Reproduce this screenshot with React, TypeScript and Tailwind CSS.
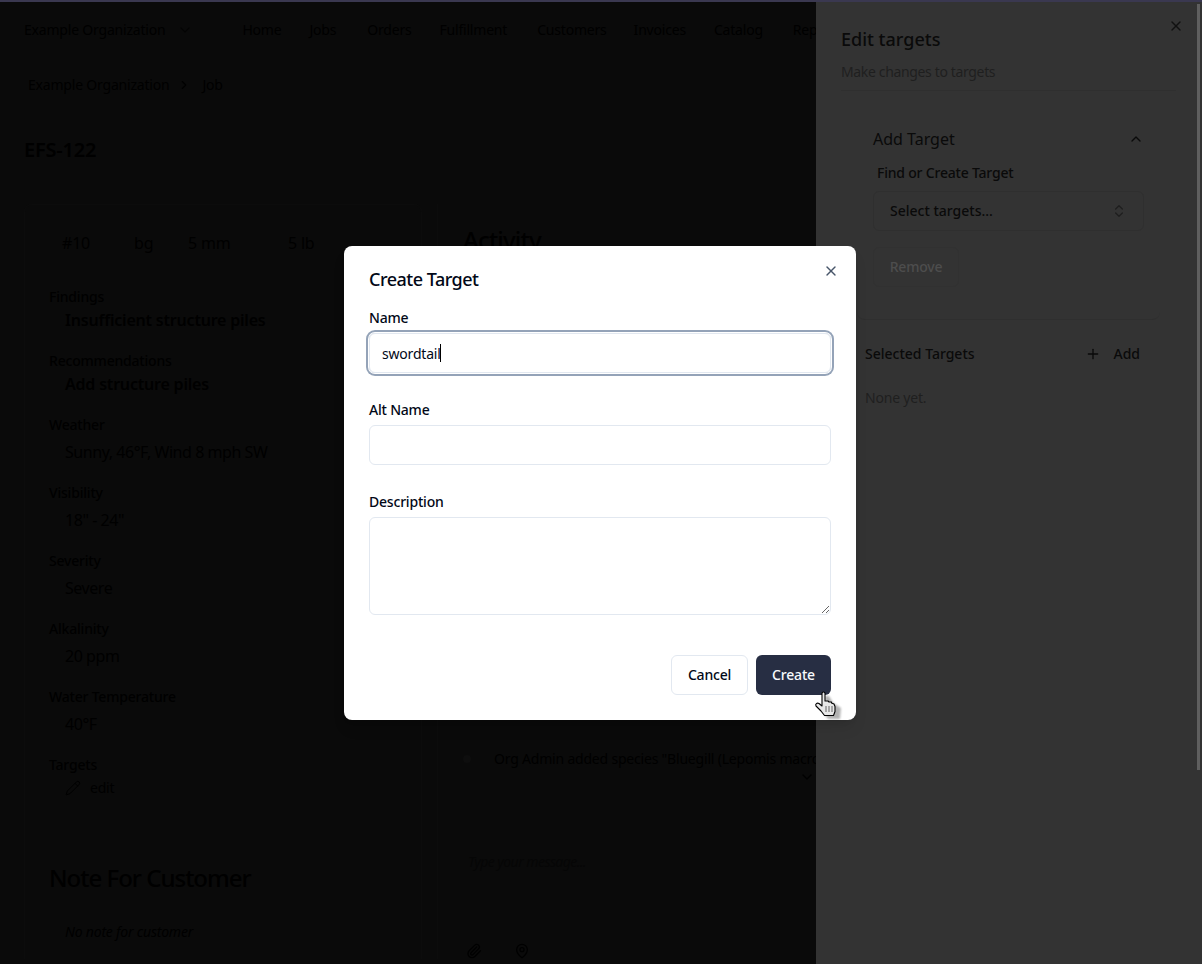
import { X, ChevronDown, ChevronUp, ChevronRight, ChevronsUpDown, Plus, Pencil, Paperclip, MapPin } from "lucide-react";

const nav = [
  { label: "Home", cls: "" },
  { label: "Jobs", cls: "mr-[3px]" },
  { label: "Orders", cls: "" },
  { label: "Fulfillment", cls: "mr-[2px]" },
  { label: "Customers", cls: "-mr-[1px]" },
  { label: "Invoices", cls: "" },
  { label: "Catalog", cls: "mr-[2px]" },
  { label: "Reports", cls: "" },
];
const fields = [
  { label: "Weather", value: "Sunny, 46°F, Wind 8 mph SW" },
  { label: "Visibility", value: '18" - 24"' },
  { label: "Severity", value: "Severe" },
  { label: "Alkalinity", value: "20 ppm" },
  { label: "Water Temperature", value: "40°F" },
];

function Field({ label, value }: { label: string; value: string }) {
  return (
    <div className="h-[68px]">
      <div className="h-5 text-sm leading-5 font-medium">{label}</div>
      <div className="mt-[5px] pl-4 text-base leading-6 tracking-[-0.45px]">{value}</div>
    </div>
  );
}

function Bold({ label, value }: { label: string; value: string }) {
  return (
    <div className="h-16">
      <div className="h-5 text-sm leading-5 font-medium">{label}</div>
      <div className="pl-4 mt-[1px] text-base leading-6 font-semibold">{value}</div>
    </div>
  );
}

function Page() {
  return (
    <div className="w-[816px] shrink-0 h-full overflow-hidden border-t-2 border-[#3a3850] text-black whitespace-nowrap">
      <div className="h-14 flex items-center pl-6 text-sm">
        <span className="shrink-0">Example Organization</span>
        <ChevronDown className="ml-3 w-4 h-4 opacity-60 shrink-0" />
        <div className="ml-[49px] flex gap-7 shrink-0">
          {nav.map((n) => (
            <span key={n.label} className={n.cls}>
              {n.label}
            </span>
          ))}
        </div>
      </div>
      <div className="mt-[17px] pl-7 flex items-center text-sm h-5">
        <span>Example Organization</span>
        <ChevronRight className="ml-2 mr-[11px] w-3.5 h-3.5" />
        <span>Job</span>
      </div>
      <div className="mt-[39px] pl-6 h-8 text-xl leading-8 font-semibold">EFS-122</div>
      <div className="mt-[38px] flex gap-[15px] pl-6">
        <div className="w-[398px] shrink-0 border border-[#0c0c0c] border-b-0 rounded-t-lg pl-6 pt-[32px]">
          <div className="flex h-6 items-center text-base -mt-[6px] pl-[13px]">
            <span className="w-[72px]">#10</span>
            <span className="w-[54px]">bg</span>
            <span className="w-[100px]">5 mm</span>
            <span>5 lb</span>
          </div>
          <div className="mt-[32px]">
            <Bold label="Findings" value="Insufficient structure piles" />
            <Bold label="Recommendations" value="Add structure piles" />
            {fields.map((f) => (
              <Field key={f.label} {...f} />
            ))}
            <div className="h-5 text-sm leading-5 font-medium">Targets</div>
            <div className="mt-[3px] pl-4 flex items-center gap-[9px] text-sm h-5">
              <Pencil className="w-4 h-4" strokeWidth={1.5} />
              <span>edit</span>
            </div>
            <div className="mt-[64px] h-8 text-2xl leading-8 font-medium tracking-[-1px]">Note For Customer</div>
            <div className="mt-[28px] pl-4 text-sm italic leading-5">No note for customer</div>
          </div>
        </div>
        <div className="flex-1 min-w-0 border-l border-[#0c0c0c] pl-[25px] pt-[20px]">
          <div className="h-8 text-2xl leading-8 font-medium tracking-[-0.8px]">Activity</div>
          <div className="mt-[493px] flex items-center gap-[23px] text-sm h-5">
            <span className="w-2 h-2 shrink-0 rounded-full bg-[#0e0e0e]" />
            <span className="shrink-0">Org Admin added species "Bluegill (Lepomis macrochirus)"</span>
          </div>
          <div className="flex justify-end pr-[1px]">
            <ChevronDown className="w-4 h-4" />
          </div>
          <div className="mt-[67px] pl-[5px] text-sm italic leading-5 text-[#060606] tracking-[-0.55px]">Type your message...</div>
          <div className="mt-[71px] flex gap-[32px] pl-[3px]">
            <Paperclip className="w-4 h-4" />
            <MapPin className="w-4 h-4" />
          </div>
        </div>
      </div>
    </div>
  );
}

function Sheet() {
  return (
    <div className="relative flex-1 h-full bg-[#333333] border-t-2 border-[#3a3850] text-[#0a0a0a] whitespace-nowrap">
      <X className="absolute right-[18px] top-[16px] w-4 h-4 text-[#111]" />
      <div className="absolute right-[2px] top-[2px] w-[3px] h-[766px] bg-[#5f5f5f]" />
      <div className="pl-[25px] pr-[26px] pt-[25px]">
        <div className="h-[25px] text-lg leading-[25px] font-medium tracking-[0px]">Edit targets</div>
        <div className="mt-[10px] h-5 text-sm leading-5 text-[#1f1f1f] tracking-[-0.35px]">Make changes to targets</div>
        <div className="mt-[8px] border-t border-[#2f2f2f]" />
        <div className="mt-px ml-[16px] mr-[16px] h-[228px] border-b border-[#2f2f2f] rounded-b-lg px-4 pt-[35px]">
          <div className="flex items-center justify-between h-6 text-base tracking-[0px]">
            <span>Add Target</span>
            <ChevronUp className="w-4 h-4" />
          </div>
          <div className="mt-[12px] pl-1 h-5 text-sm leading-5 font-medium">Find or Create Target</div>
          <div className="mt-2 w-[271px] h-10 rounded-md border border-[#2f2f2f] flex items-center justify-between pl-4 pr-[16px] text-sm font-medium tracking-[0px]">
            <span>Select targets...</span>
            <ChevronsUpDown className="w-4 h-4 opacity-50" />
          </div>
          <div className="mt-[16px] w-[86px] h-10 rounded-md border border-[#313131] flex items-center justify-center text-sm font-medium text-[#4d4d4d]">
            Remove
          </div>
        </div>
        <div className="mt-[24px] ml-[-1px] pl-[25px] pr-[36px] flex items-center justify-between h-5 text-sm font-medium tracking-[0px]">
          <span>Selected Targets</span>
          <span className="flex items-center gap-[12px]">
            <Plus className="w-4 h-4" />
            Add
          </span>
        </div>
        <div className="mt-[24px] ml-[24px] h-5 text-sm leading-5 text-[#1f1f1f]">None yet.</div>
      </div>
    </div>
  );
}

function Dialog() {
  return (
    <div className="absolute left-[344px] top-[246px] w-[512px] h-[474px] bg-white rounded-lg px-[25px] pt-6 text-[#020817] shadow-lg">
      <X className="absolute right-[17px] top-[17px] w-4 h-4 text-[#475569]" />
      <div className="h-[18px] text-lg leading-[18px] font-medium tracking-[-0.5px]">Create Target</div>
      <div className="mt-[20px] h-5 text-sm leading-5 font-medium">Name</div>
      <div className="relative mt-[5px]">
        <input
          readOnly
          value="swordtail"
          className="w-full h-10 rounded-md border border-[#e2e8f0] px-3 text-sm tracking-[-0.2px] outline-none ring-2 ring-[#94a3b8] ring-offset-1"
        />
        <span className="absolute left-[71px] top-[11px] w-px h-[18px] bg-black" />
      </div>
      <div className="mt-[27px] h-5 text-sm leading-5 font-medium">Alt Name</div>
      <input readOnly className="mt-[5px] block w-full h-10 rounded-md border border-[#e2e8f0] px-3 text-sm outline-none" />
      <div className="mt-[27px] h-5 text-sm leading-5 font-medium">Description</div>
      <textarea readOnly className="mt-[5px] block w-full h-[98px] rounded-md border border-[#e2e8f0] px-3 py-2 text-sm outline-none" />
      <div className="mt-10 flex justify-end gap-2">
        <div className="w-[77px] h-10 rounded-md border border-[#e2e8f0] flex items-center justify-center text-sm font-medium">Cancel</div>
        <div className="w-[75px] h-10 rounded-md bg-[#272e43] text-[#f8fafc] flex items-center justify-center text-sm font-medium">Create</div>
      </div>
    </div>
  );
}

function HandCursor() {
  return (
    <svg className="absolute left-[812px] top-[688px]" width="32" height="34" viewBox="0 0 32 34">
      <path d="M12 8 L12 18 L10 17 L7 18 L12 27 L15 31 L27 31 L28 20 L20 15 L16 8 Z" fill="#000" opacity="0.3" transform="translate(1 0)" className="blur-[1px]" />
      <path d="M10 5.5 C10 3.5 13 3.5 13 5.5 L13 13 L16 13 C16 13 17 14 17 14 L19.5 14 L19.5 15 L22 16 L23 18.5 L23 23.5 L21.5 27.5 L12.5 27.5 L9 23 L4 18 C3 16 5 14.5 7 15.5 L10 18 Z" fill="#e8e8e8" stroke="#000" strokeWidth="1.1" strokeLinejoin="round" />
      <path d="M14 18 L14 24 M17 18 L17 24 M20 18 L20 24" stroke="#666" strokeWidth="1" />
    </svg>
  );
}

export default function App() {
  return (
    <div className="relative h-[964px] w-full overflow-hidden bg-[#0a0a0a] font-['Noto_Sans',sans-serif] tracking-[-0.2px] flex">
      <Page />
      <Sheet />
      <Dialog />
      <HandCursor />
    </div>
  );
}
